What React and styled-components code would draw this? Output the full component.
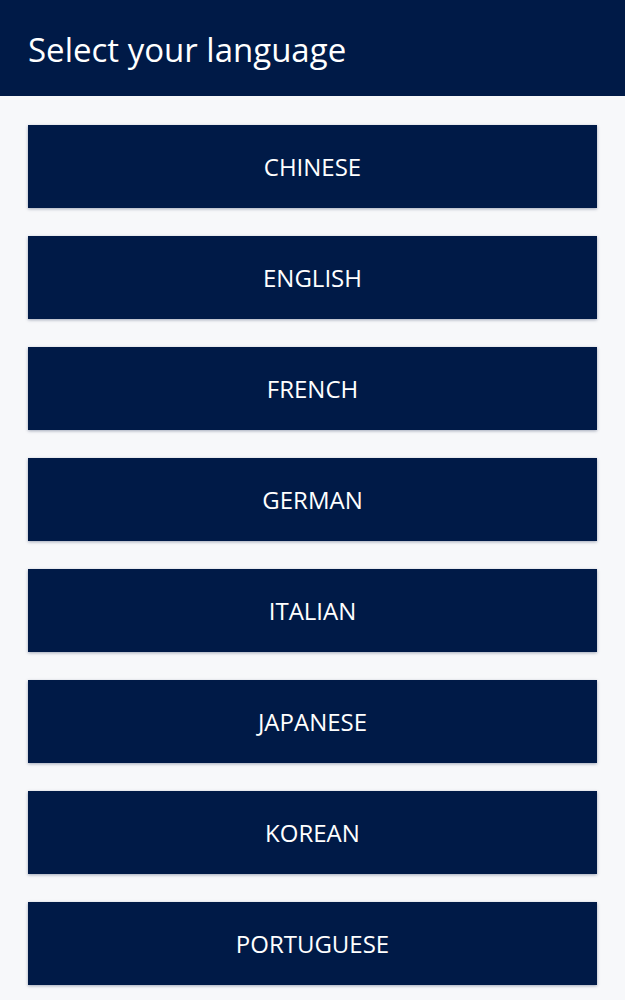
import React from "react";
import styled, { createGlobalStyle } from "styled-components";

const Global = createGlobalStyle`
  html, body { margin: 0; padding: 0; background: #f7f8fa; }
  body { font-family: "Open Sans", "Noto Sans", sans-serif; }
`;

const Page = styled.div`
  min-height: 1000px;
  background: #f7f8fa;
`;

const Header = styled.header`
  height: 96px;
  background: #001a47;
  display: flex;
  align-items: center;
  padding: 0 28px;
  box-sizing: border-box;
`;

const Title = styled.h1`
  margin: 0;
  color: #ffffff;
  font-size: 33px;
  font-weight: 400;
  letter-spacing: 0;
  padding-top: 2px;
`;

const List = styled.div`
  display: flex;
  flex-direction: column;
  gap: 28px;
  padding: 29px 28px 0 28px;
`;

const LangButton = styled.button`
  height: 83px;
  border: none;
  background: #001a47;
  color: #ffffff;
  font-family: "Open Sans", "Noto Sans", sans-serif;
  font-size: 24px;
  font-weight: 400;
  text-transform: uppercase;
  box-shadow: 0 1px 3px rgba(0, 20, 60, 0.35);
  cursor: pointer;
  display: flex;
  align-items: center;
  justify-content: center;
  padding: 0;
`;

const languages = [
  "Chinese",
  "English",
  "French",
  "German",
  "Italian",
  "Japanese",
  "Korean",
  "Portuguese",
];

export default function App() {
  return (
    <>
      <Global />
      <Page>
        <Header>
          <Title>Select your language</Title>
        </Header>
        <List>
          {languages.map((l) => (
            <LangButton key={l}>{l}</LangButton>
          ))}
        </List>
      </Page>
    </>
  );
}
